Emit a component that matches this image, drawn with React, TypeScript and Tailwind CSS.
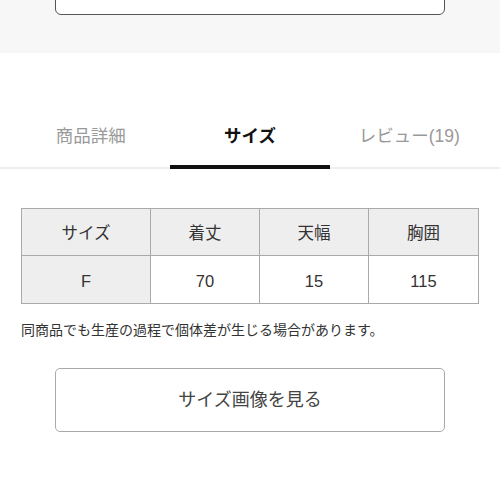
const font = { fontFamily: '"Liberation Sans", "Noto Sans CJK JP", sans-serif' };

const headers = ['サイズ', '着丈', '天幅', '胸囲'];
const values = ['F', '70', '15', '115'];
const widths = ['w-[129px]', 'w-[109px]', 'w-[109px]', 'flex-1'];

function App() {
  return (
    <div className="w-[500px] h-[500px] bg-white overflow-hidden" style={font}>
      <div className="h-[53px] bg-[#f7f7f7] px-[55px] flex flex-col">
        <div className="-mt-[45px] h-[60px] rounded-[6px] border-[1.5px] border-[#555] bg-white" />
      </div>

      <div className="pt-[66px]">
        <div className="flex px-[11px] border-b-[2px] border-[#eeeeee]">
          {['商品詳細', 'サイズ', 'レビュー(19)'].map((t, i) => (
            <div key={t} className="flex-1 flex flex-col items-center">
              <div
                className={`h-[36px] flex items-center text-[17.5px] leading-none ${
                  i === 1 ? 'text-[#111] font-bold' : 'text-[#999]'
                }`}
              >
                {t}
              </div>
              <div className={`h-[4px] w-full -mb-[2px] mt-[10px] ${i === 1 ? 'bg-[#111]' : ''}`} />
            </div>
          ))}
        </div>
      </div>

      <div className="px-[21px] pt-[39px]">
        <div className="flex flex-col border-[1.5px] border-[#aaa] text-[16.5px] text-[#333]">
          {[headers, values].map((row, r) => (
            <div key={r} className={`flex h-[47px] ${r === 0 ? 'border-b-[1.5px] border-[#aaa]' : ''}`}>
              {row.map((c, i) => (
                <div
                  key={i}
                  className={`${widths[i]} flex items-center justify-center pt-[3px] ${
                    i < 3 ? 'border-r-[1.5px] border-[#aaa]' : ''
                  } ${r === 0 || i === 0 ? 'bg-[#eeeeee]' : 'bg-white'}`}
                >
                  {c}
                </div>
              ))}
            </div>
          ))}
        </div>
        <p className="mt-[19px] text-[14px] text-[#333] leading-none">
          同商品でも生産の過程で個体差が生じる場合があります。
        </p>
      </div>

      <div className="px-[55px] pt-[31px]">
        <div className="h-[64px] rounded-[5px] border-[1.5px] border-[#aaa] flex items-center justify-center text-[18px] text-[#444]">
          サイズ画像を見る
        </div>
      </div>
    </div>
  );
}

export default App;
